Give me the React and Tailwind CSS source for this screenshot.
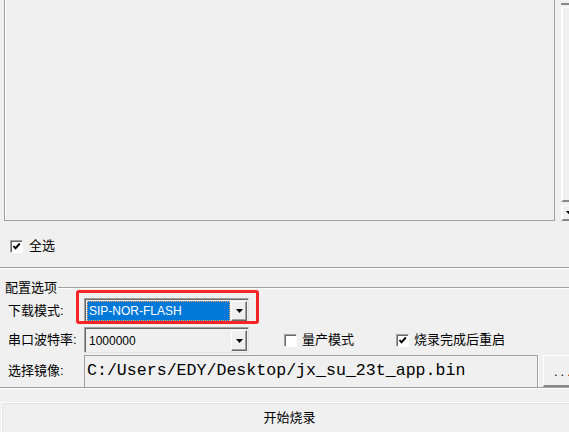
const Check = ({ checked }) => (
  <span className="w-[13px] h-[13px] shrink-0 border border-[#a0a0a0] border-r-white border-b-white bg-white shadow-[inset_1px_1px_0_#696969] flex items-center justify-center">
    {checked && (
      <svg width="9" height="9" viewBox="0 0 9 9">
        <path d="M1.5 4 L3.5 6.3 L7.8 1.5" stroke="#000" strokeWidth="1.9" fill="none" />
      </svg>
    )}
  </span>
);

const Arrow = () => (
  <svg width="7" height="4" viewBox="0 0 7 4">
    <path d="M0 0 H7 L3.5 4 Z" fill="#000" />
  </svg>
);

const Combo = ({ value, selected, h }) => (
  <div className={`ml-[76px] w-[165px] shrink-0 ${h} border border-[#a0a0a0] border-r-[#e3e3e3] border-b-[#e3e3e3] shadow-[inset_1px_1px_0_#696969] bg-[#f0f0f0] flex p-[2px] pr-[1px] pb-[1px]`}>
    <div className={`flex-1 flex items-center pl-[2px] text-[12px] ${selected ? "bg-[#0078d7] text-white outline-1 outline-dotted outline-[#f3a05a] -outline-offset-1" : "text-black"}`}>
      {value}
    </div>
    <div className="w-[16px] ml-[1px] border-t border-l border-white border-r border-b border-r-[#696969] border-b-[#696969] shadow-[inset_-1px_-1px_0_#a0a0a0] flex items-center justify-center">
      <Arrow />
    </div>
  </div>
);

export default function App() {
  return (
    <div className="relative w-[569px] h-[432px] overflow-hidden bg-[#f0f0f0] text-black font-['Liberation_Sans','Noto_Sans_CJK_SC',sans-serif]">
      <div className="flex h-[221px]">
        <div className="ml-[4px] w-[551px] h-[221px] shrink-0 border-x border-b border-[#a0a0a0] shadow-[inset_1px_0_0_#fff]" />
        <div className="ml-[6px] w-[12px] shrink-0 flex flex-col">
          <div className="h-[5px] border-b-2 border-[#888]" />
          <div className="mt-[2px] h-[200px] border-l-2 border-t border-white border-b-2 border-b-[#888]" />
          <div className="mt-[3px] h-[16px] border-l-2 border-t border-white border-b-2 border-b-[#888] flex items-center pl-[3px]">
            <svg width="5" height="3" viewBox="0 0 5 3"><path d="M0 0 H5 L2.5 3 Z" fill="#000" /></svg>
          </div>
        </div>
      </div>

      <div className="mt-[17px] h-[16px] ml-[10px] flex items-center gap-[6px] text-[13px]">
        <Check checked />
        <span>全选</span>
      </div>

      <div className="mt-[13px] h-[2px] border-t border-[#a0a0a0] border-b border-b-white" />

      <div className="mt-[11px] h-[16px] flex items-center text-[13px] leading-[16px]">
        <span className="ml-[5px]">配置选项</span>
        <div className="ml-[1px] flex-1 h-[2px] border-t border-[#a0a0a0] border-b border-b-white" />
      </div>

      <div className="mt-[2px] h-[25px] flex items-center text-[13px]">
        <span className="ml-[8px] w-0 whitespace-nowrap">下载模式:</span>
        <Combo value="SIP-NOR-FLASH" selected h="h-[25px]" />
      </div>

      <div className="mt-[4px] h-[26px] flex items-center text-[13px] whitespace-nowrap">
        <span className="ml-[8px] w-0 whitespace-nowrap">串口波特率:</span>
        <Combo value="1000000" h="h-[26px]" />
        <div className="ml-[35px] shrink-0"><Check /></div>
        <span className="ml-[5px]">量产模式</span>
        <div className="ml-[42px] shrink-0"><Check checked /></div>
        <span className="ml-[5px]">烧录完成后重启</span>
      </div>

      <div className="mt-[2px] h-[32px] flex items-stretch text-[13px]">
        <span className="ml-[8px] w-0 whitespace-nowrap self-center">选择镜像:</span>
        <div className="ml-[76px] w-[454px] shrink-0 border-t border-l border-[#a0a0a0] border-r border-r-[#a0a0a0] shadow-[1px_0_0_#fff] flex items-center pl-[2px] font-['Liberation_Mono',monospace] text-[16.6px] whitespace-nowrap">
          C:/Users/EDY/Desktop/jx_su_23t_app.bin
        </div>
        <div className="ml-[5px] w-[40px] shrink-0 border-t border-l border-white border-b-2 border-b-[#888] flex items-center pl-[10px] pt-[3px] text-[13px] tracking-[3px]">
          ...
        </div>
      </div>

      <div className="h-[2px] border-t border-[#a0a0a0] border-b border-b-white" />

      <div className="mt-[13px] ml-[1px] w-[576px] h-[40px] border-t border-l border-white shadow-[inset_1px_1px_0_#e3e3e3] flex justify-center pt-[5px] text-[13px]">
        开始烧录
      </div>

      <div className="absolute left-[76px] top-[290px] w-[183px] h-[34px] border-[3px] border-[#f52525] rounded-[3px]" />
    </div>
  );
}
